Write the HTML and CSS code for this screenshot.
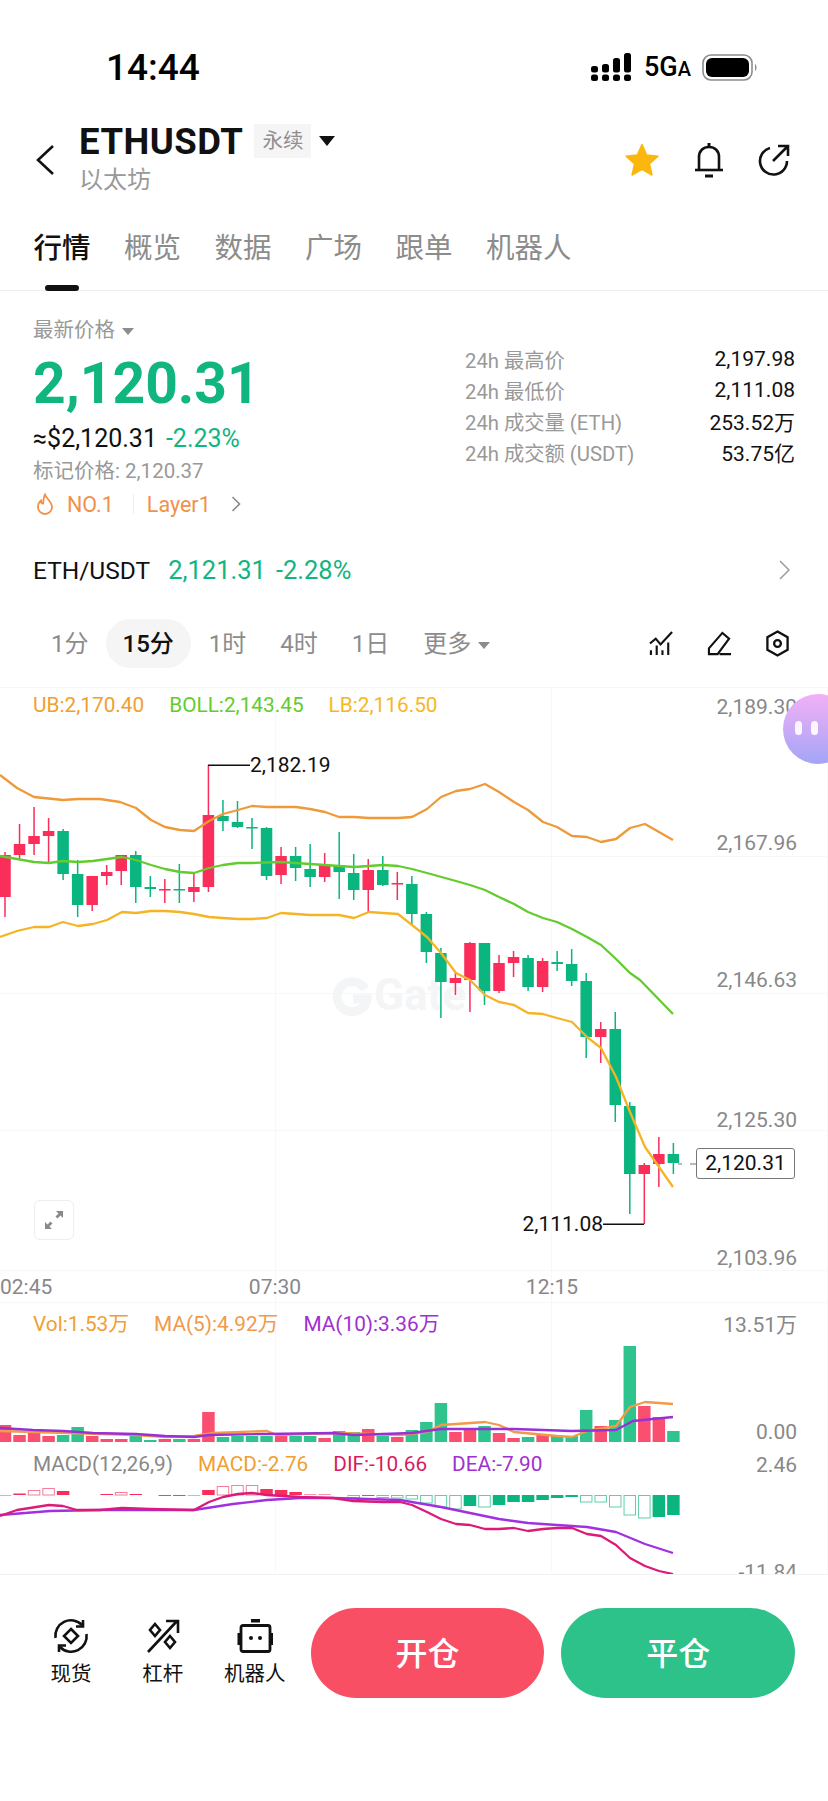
FILE: index.html
```html
<!DOCTYPE html>
<html lang="zh-CN">
<head>
    <meta charset="UTF-8">
    <title>ETHUSDT</title>
    <link rel="stylesheet" href="styles.css">
</head>
<body>
    <div class="status-bar">
        <span class="status-time">14:44</span>
        <div class="status-icons">
            <svg class="signal" viewBox="0 0 40 28" width="40" height="28" fill="#000">
                <rect x="0" y="13" width="7" height="6.500" rx="2.500"/><rect x="0" y="21.500" width="7" height="6.500" rx="2.500"/>
                <rect x="11" y="11" width="7" height="8.500" rx="2.500"/><rect x="11" y="21.500" width="7" height="6.500" rx="2.500"/>
                <rect x="22" y="5" width="7" height="14.500" rx="2.500"/><rect x="22" y="21.500" width="7" height="6.500" rx="2.500"/>
                <rect x="33" y="0" width="7" height="19.500" rx="2.500"/><rect x="33" y="21.500" width="7" height="6.500" rx="2.500"/>
            </svg>
            <span class="network">5G<small>A</small></span>
            <svg class="battery" viewBox="0 0 56 27" width="56" height="27">
                <rect x="1" y="1" width="49" height="25" rx="8" fill="none" stroke="#8c8c8c" stroke-width="1.600"/>
                <rect x="4" y="4" width="43" height="19" rx="6" fill="#000"/>
                <path d="M53 10c2 1 2 6 0 7z" fill="#8c8c8c"/>
            </svg>
        </div>
    </div>

    <div class="topbar">
        <svg class="back" viewBox="0 0 18 30" width="18" height="30" fill="none" stroke="#111" stroke-width="2.600"><path d="M17 1 2 15l15 14"/></svg>
        <div class="title-block">
            <div class="title-row">
                <span class="symbol">ETHUSDT</span>
                <span class="tag">永续</span>
                <span class="caret"></span>
            </div>
            <div class="subtitle">以太坊</div>
        </div>
        <div class="top-actions">
            <svg viewBox="0 0 36 34" width="36" height="34"><path d="M18 1.500l4.700 10.500 11.300 1.200-8.500 7.600 2.400 11.200L18 26.300 8.100 32l2.400-11.200L2 13.200 13.300 12z" fill="#fbb70f" stroke="#fbb70f" stroke-width="1.500" stroke-linejoin="round"/></svg>
            <svg viewBox="0 0 32 36" width="32" height="36" fill="none" stroke="#111" stroke-width="2.600"><path d="M6 27V15C6 9 10 5 16 5s10 4 10 10v12"/><path d="M2 28h28"/><path d="M16 1v4M12 34h8" stroke-width="3"/></svg>
            <svg viewBox="0 0 32 32" width="32" height="32" fill="none" stroke="#111" stroke-width="2.600"><path d="M29 17A13.500 13.500 0 1 1 12 4"/><path d="M15 17 29 3M20 2h10v10"/></svg>
        </div>
    </div>

    <div class="tabs">
        <span class="tab active">行情</span>
        <span class="tab">概览</span>
        <span class="tab">数据</span>
        <span class="tab">广场</span>
        <span class="tab">跟单</span>
        <span class="tab">机器人</span>
    </div>

    <section class="price-panel">
        <div class="price-left">
            <div class="price-label">最新价格<span class="caret-small"></span></div>
            <div class="price-big">2,120.31</div>
            <div class="price-usd">≈$2,120.31<span class="green">-2.23%</span></div>
            <div class="price-mark">标记价格: 2,120.37</div>
            <div class="rank-row">
                <svg viewBox="0 0 18 22" width="18" height="22" fill="none" stroke="#f0914a" stroke-width="1.800"><path d="M9 1.500c1 4 7 7 7 12.500a7 7 0 0 1-14 0c0-3 1-5 3-6.500 0 2 1 3 2 3 1-3 0-6 2-9z"/></svg>
                <span class="rank-text">NO.1</span>
                <span class="rank-sep"></span>
                <span class="rank-text">Layer1</span>
                <svg class="rank-more" viewBox="0 0 10 16" width="10" height="16" fill="none" stroke="#8a8a8a" stroke-width="1.600"><path d="M1.500 1l7 7-7 7"/></svg>
            </div>
        </div>
        <div class="stats">
            <span>24h 最高价</span><b>2,197.98</b>
            <span>24h 最低价</span><b>2,111.08</b>
            <span>24h 成交量 (ETH)</span><b>253.52万</b>
            <span>24h 成交额 (USDT)</span><b>53.75亿</b>
        </div>
    </section>

    <div class="spot-row">
        <span class="spot-name">ETH/USDT</span>
        <span class="green">2,121.31</span>
        <span class="green">-2.28%</span>
        <svg class="spot-more" viewBox="0 0 11 20" width="11" height="20" fill="none" stroke="#9a9a9a" stroke-width="1.500"><path d="M1 1l9 9-9 9"/></svg>
    </div>

    <div class="interval-row">
        <span class="interval">1分</span>
        <span class="interval active">15分</span>
        <span class="interval">1时</span>
        <span class="interval">4时</span>
        <span class="interval">1日</span>
        <span class="interval">更多<span class="caret-small"></span></span>
        <div class="chart-tools">
            <svg viewBox="0 0 26 26" width="25" height="25" fill="none" stroke="#111" stroke-width="2.200"><path d="M1 13l6-5 5 6L24 1"/><path d="M2 20v5M8 15v10M14 20v5M20 12v13"/></svg>
            <svg viewBox="0 0 26 26" width="25" height="25" fill="none" stroke="#111" stroke-width="2.200"><path d="M2 24v-6L16 2l7 6-12 16zM13 24h12"/></svg>
            <svg viewBox="0 0 26 28" width="25" height="27" fill="none" stroke="#111" stroke-width="2.400"><path d="M13 1.500l10.500 6v13L13 26.500l-10.500-6v-13z"/><circle cx="13" cy="14" r="3.500"/></svg>
        </div>
    </div>

    <div class="chart">
        <svg class="chart-svg" id="chartSvg" viewBox="0 680 828 894" width="828" height="894"></svg>

        <div class="legend legend-boll">
            <span class="c-orange">UB:2,170.40</span>
            <span class="c-green">BOLL:2,143.45</span>
            <span class="c-yellow">LB:2,116.50</span>
        </div>
        <div class="legend legend-vol">
            <span class="c-orange">Vol:1.53万</span>
            <span class="c-peach">MA(5):4.92万</span>
            <span class="c-purple">MA(10):3.36万</span>
        </div>
        <div class="legend legend-macd">
            <span class="c-gray">MACD(12,26,9)</span>
            <span class="c-orange">MACD:-2.76</span>
            <span class="c-crimson">DIF:-10.66</span>
            <span class="c-purple">DEA:-7.90</span>
        </div>

        <div class="price-tag">2,120.31</div>
        <div class="expand">
            <svg viewBox="0 0 20 20" width="20" height="20" fill="#8a8a8a"><path d="M12 1h7v7l-2.500-2.500-3 3-2-2 3-3zM8 19H1v-7l2.500 2.500 3-3 2 2-3 3z"/></svg>
        </div>
        <div class="assistant"><i></i><i></i></div>
    </div>

    <div class="footer">
        <div class="shortcut">
            <svg viewBox="0 0 36 36" width="36" height="36" fill="none" stroke="#111" stroke-width="2.600"><path d="M2.500 20A15.500 15.500 0 0 1 29 7M33.500 16A15.500 15.500 0 0 1 7 29"/><path d="M30 2v6.500h-7M6 34v-6.500h7"/><path d="M18 11l7 7-7 7-7-7z"/></svg>
            <span>现货</span>
        </div>
        <div class="shortcut">
            <svg viewBox="0 0 36 36" width="36" height="36" fill="none" stroke="#111" stroke-width="2.600"><path d="M3 34 32 3M21 3h12v12"/><path d="M10 6l5 6-5 6-5-6zM25 18l5 6-5 6-5-6z"/></svg>
            <span>杠杆</span>
        </div>
        <div class="shortcut">
            <svg viewBox="0 0 36 36" width="36" height="36"><rect x="14" y="1" width="9" height="3.500" fill="#111"/><rect x="4" y="7.500" width="29" height="26" rx="2" fill="none" stroke="#111" stroke-width="2.800"/><rect x="0.500" y="15" width="3" height="12" fill="#111"/><rect x="33" y="15" width="3" height="12" fill="#111"/><circle cx="14" cy="20" r="2" fill="#111"/><circle cx="23" cy="20" r="2" fill="#111"/></svg>
            <span>机器人</span>
        </div>
        <button class="trade-btn open">开仓</button>
        <button class="trade-btn close">平仓</button>
    </div>

    <script src="chart.js"></script>
</body>
</html>
```

FILE: styles.css
```css
/* Global */
body {
    margin: 0;
    width: 828px;
    height: 1801px;
    overflow: hidden;
    background: #fff;
    color: #111;
    font-family: Roboto, "Noto Sans CJK SC", sans-serif;
}

.green {
    color: #10b57f;
}

/* Status bar */
.status-bar {
    height: 100px;
    box-sizing: border-box;
    padding: 47px 70px 13px 106px;
    display: flex;
    justify-content: space-between;
    align-items: center;
}

.status-time {
    font-size: 37px;
    font-weight: 500;
    color: #000;
}

.status-icons {
    display: flex;
    align-items: center;
}

.network {
    margin-left: 13px;
    margin-right: 11px;
    font-size: 27px;
    font-weight: 500;
    color: #000;
}

.network small {
    font-size: 20px;
}

/* Header */
.topbar {
    height: 80px;
    margin-top: 20px;
    padding: 0 36px;
    display: flex;
    align-items: center;
}

.back {
    flex: none;
}

.title-block {
    align-self: flex-start;
    margin-left: 25px;
}

.title-row {
    height: 42px;
    display: flex;
    align-items: center;
}

.symbol {
    font-size: 36.500px;
    font-weight: 700;
    letter-spacing: 0.5px;
}

.tag {
    margin-left: 11px;
    padding: 0 8px;
    height: 34px;
    line-height: 34px;
    background: #f5f5f5;
    color: #8f8f8f;
    font-size: 20.500px;
}

.caret {
    margin-left: 8px;
    border-left: 8px solid transparent;
    border-right: 8px solid transparent;
    border-top: 10px solid #111;
}

.subtitle {
    height: 32px;
    margin-top: 2px;
    line-height: 32px;
    font-size: 24px;
    color: #999;
}

.top-actions {
    margin-left: auto;
    margin-right: 2px;
    display: flex;
    align-items: center;
    gap: 33px;
}

/* Tabs */
.tabs {
    height: 91px;
    box-sizing: border-box;
    padding-left: 33.500px;
    display: flex;
    gap: 33.500px;
    border-bottom: 1px solid #eee;
}

.tab {
    position: relative;
    padding-top: 33px;
    line-height: 32px;
    font-size: 28.500px;
    color: #8c8c8c;
}

.tab.active {
    color: #111;
    font-weight: 500;
}

.tab.active::after {
    content: "";
    position: absolute;
    left: 11px;
    bottom: -1px;
    width: 34px;
    height: 6px;
    border-radius: 3px;
    background: #111;
}

/* Price block */
.price-panel {
    height: 227px;
    box-sizing: border-box;
    padding: 27px 33px 0 33px;
    display: flex;
    justify-content: space-between;
}

.price-label {
    line-height: 24px;
    font-size: 20.500px;
    color: #999;
}

.caret-small {
    display: inline-block;
    margin-left: 7px;
    vertical-align: middle;
    border-left: 6px solid transparent;
    border-right: 6px solid transparent;
    border-top: 7px solid #8c8c8c;
}

.price-big {
    margin-top: 12px;
    line-height: 60px;
    font-size: 57px;
    font-weight: 700;
    color: #10b57f;
}

.price-usd {
    margin-top: 10px;
    line-height: 30px;
    font-size: 25px;
}

.price-usd .green {
    margin-left: 9px;
}

.price-mark {
    margin-top: 2px;
    line-height: 30px;
    font-size: 20.500px;
    color: #999;
}

.rank-row {
    margin-top: 4px;
    height: 28px;
    display: flex;
    align-items: center;
    padding-left: 3px;
}

.rank-text {
    margin-left: 13px;
    font-size: 21.500px;
    color: #f0914a;
}

.rank-sep {
    margin-left: 19px;
    margin-right: 0;
    width: 1px;
    height: 20px;
    background: #eee;
}

.rank-more {
    margin-left: 20px;
}

.stats {
    width: 330px;
    margin-top: 26px;
    display: grid;
    grid-template-columns: 1fr auto;
    grid-auto-rows: 30.800px;
    align-items: center;
    font-size: 20.300px;
    color: #999;
}

.stats b {
    font-size: 21px;
    font-weight: 400;
    color: #111;
    text-align: right;
}

/* Spot row */
.spot-row {
    height: 50px;
    margin-top: 27px;
    padding: 0 38px 0 33px;
    display: flex;
    align-items: center;
    gap: 10px;
    font-size: 25.500px;
}

.spot-name {
    margin-right: 8px;
    font-size: 24.500px;
}

.spot-more {
    margin-left: auto;
}

/* Interval row */
.interval-row {
    height: 49px;
    margin-top: 24px;
    padding: 0 38px 0 34px;
    display: flex;
    align-items: center;
}

.interval {
    height: 49px;
    line-height: 51px;
    padding: 0 17px;
    font-size: 24px;
    color: #8c8c8c;
}

.interval.active {
    margin-right: 1px;
    color: #111;
    font-weight: 500;
    background: #f5f5f5;
    border-radius: 25px;
}

.chart-tools {
    margin-left: auto;
    display: flex;
    align-items: center;
    gap: 33px;
}

/* Chart */
.chart {
    position: relative;
    height: 894px;
    margin-top: 12px;
    overflow: hidden;
    border-bottom: 1px solid #f2f2f2;
}

.chart-svg {
    position: absolute;
    left: 0;
    top: 0;
    font-family: Roboto, sans-serif;
    font-size: 21px;
}

.legend {
    position: absolute;
    left: 33px;
    display: flex;
    gap: 25px;
    line-height: 24px;
    font-size: 20.800px;
    white-space: nowrap;
}

.legend-boll {
    top: 13px;
}

.legend-vol {
    top: 632px;
}

.legend-macd {
    top: 772px;
}

.c-orange { color: #f0a030; }
.c-green { color: #62cc2e; }
.c-yellow { color: #f5b81f; }
.c-peach { color: #f09a4a; }
.c-purple { color: #a030d0; }
.c-crimson { color: #d81b60; }
.c-gray { color: #888; }

.price-tag {
    position: absolute;
    left: 696px;
    top: 468px;
    width: 97px;
    height: 29px;
    line-height: 29px;
    border: 1px solid #777;
    border-radius: 3px;
    background: #fff;
    text-align: center;
    font-size: 21px;
}

.expand {
    position: absolute;
    left: 34px;
    top: 520px;
    width: 38px;
    height: 38px;
    border: 1px solid #eee;
    border-radius: 6px;
    background: #fff;
    display: flex;
    align-items: center;
    justify-content: center;
}

.assistant {
    position: absolute;
    left: 783px;
    top: 14px;
    width: 70px;
    height: 70px;
    border-radius: 50%;
    background: linear-gradient(#f2b0f6, #a3a5f6);
    display: flex;
    gap: 9px;
    padding: 27px 0 0 12px;
    box-sizing: border-box;
}

.assistant i {
    width: 7px;
    height: 14px;
    border-radius: 3.500px;
    background: #fff;
    opacity: 0.9;
}

/* Footer */
.footer {
    height: 226px;
    box-sizing: border-box;
    padding: 33px 33px 0 25px;
    display: flex;
    align-items: flex-start;
}

.shortcut {
    width: 92px;
    padding-top: 10px;
    display: flex;
    flex-direction: column;
    align-items: center;
    font-size: 20.500px;
}

.shortcut span {
    margin-top: 6px;
    line-height: 28px;
}

.trade-btn {
    width: 234px;
    height: 90px;
    padding: 0 0 4px;
    border: none;
    border-radius: 45px;
    color: #fff;
    font-family: inherit;
    font-size: 32px;
    font-weight: 500;
}

.trade-btn.open {
    margin-left: 10px;
    background: #f94f65;
}

.trade-btn.close {
    margin-left: 17px;
    background: #2cc28a;
}
```

FILE: chart.js
```js
// color, high, body top, body bottom, low (page y)
const candles = [
    ['r',852,855,897,917],['r',824,844,855,859],['r',807,836,844,855],['r',818,831,836,862],
    ['g',829,831,874,880],['g',860,874,905,917],['r',876,876,905,911],['r',865,872,876,885],
    ['r',855,855,871,885],['g',851,855,887,903],['g',876,887,889,897],['r',879,889,890,903],
    ['g',864,889,890,903],['r',873,887,892,902],['r',765,815,887,892],['g',800,816,821,831],
    ['g',801,822,827,828],['g',818,827,828,849],['g',827,828,876,880],['r',847,856,875,884],
    ['g',847,856,868,881],['g',844,869,877,887],['r',853,865,877,882],['g',832,865,872,899],
    ['g',854,873,890,900],['r',859,870,890,912],['g',856,870,885,886],['r',872,883,884,900],
    ['g',876,884,914,925],['g',912,914,952,963],['g',948,953,982,1018],['r',972,978,983,995],
    ['r',942,943,980,1012],['g',943,943,991,1005],['r',955,963,991,993],['r',951,957,963,977],
    ['g',955,958,987,991],['r',958,961,987,992],['g',951,962,964,971],['g',949,964,981,986],
    ['g',973,981,1037,1058],['r',1022,1029,1037,1063],['g',1012,1029,1105,1122],['g',1102,1106,1174,1214],
    ['r',1163,1165,1174,1224],['r',1137,1154,1164,1187],['g',1143,1154,1163,1174]
];

const volumes = [17,7,11,6,7,15,6,3,3,6,2,3,3,3,30,5,6,6,6,6,6,6,4,11,10,13,6,5,12,20,39,10,13,16,9,4,5,7,6,6,32,16,22,96,36,25,11];

// height above (+) or below (-) the zero line, last flag = hollow
const macd = [
    [-0.500,0],[1.500,0],[5,1],[7,1],[4,0],[0,0],[0,0],[1,0],[3,1],[1,0],[0,0],[-1,0],
    [-1,0],[-0.500,0],[5,0],[9,1],[10,1],[10,1],[6,0],[5,0],[3,0],[0.500,0],[0.500,0],[0,0],
    [-2.500,1],[-1,0],[-2.500,1],[-3,1],[-4,1],[-8,1],[-12,1],[-14,1],[-11,0],[-12,1],[-10,0],[-7,0],
    [-7,0],[-5,0],[-3,0],[-2,0],[-7,1],[-7,1],[-12,1],[-20,1],[-23,1],[-22,0],[-20,0]
];

const lines = [
    ['#ee9a3a', [[0,775],[17,788],[34,797],[63,800],[78,799],[100,799],[120,802],[136,808],[151,820],[165,827],[180,830],[194,831],[209,821],[223,814],[238,810],[252,806],[267,807],[296,807],[310,809],[325,812],[339,817],[354,817],[369,818],[398,818],[412,817],[427,809],[441,797],[456,791],[470,789],[485,784],[499,792],[514,802],[528,810],[543,822],[557,827],[572,836],[587,837],[601,842],[616,839],[630,828],[645,824],[659,832],[673,840]]],
    ['#62cc2e', [[0,856],[17,859],[34,862],[49,863],[63,861],[78,862],[93,861],[107,859],[122,857],[136,860],[151,865],[165,869],[180,872],[194,873],[209,868],[223,865],[238,863],[252,863],[281,862],[310,864],[325,865],[339,866],[354,867],[369,866],[383,865],[398,866],[412,869],[427,873],[456,881],[470,885],[485,890],[499,897],[514,904],[528,912],[543,918],[557,922],[572,929],[587,937],[601,945],[616,959],[630,973],[640,980],[673,1014]]],
    ['#f5b426', [[0,937],[17,931],[34,927],[49,927],[63,922],[78,926],[93,924],[107,920],[122,912],[136,913],[151,911],[165,911],[180,912],[194,914],[209,917],[223,918],[238,919],[252,919],[267,918],[281,913],[296,914],[310,915],[325,915],[339,915],[354,918],[369,912],[383,913],[398,914],[412,925],[427,937],[441,953],[456,973],[470,980],[485,995],[499,1002],[514,1005],[528,1013],[543,1014],[557,1018],[572,1022],[587,1037],[601,1048],[616,1077],[630,1112],[645,1147],[659,1167],[673,1187]]],
    ['#f09a4a', [[0,1431],[136,1435],[165,1437],[194,1436],[213,1433],[267,1431],[277,1435],[340,1433],[369,1434],[400,1435],[427,1432],[441,1425],[456,1424],[485,1422],[499,1425],[514,1432],[557,1436],[572,1437],[587,1431],[616,1426],[630,1407],[645,1402],[673,1404]]],
    ['#9a2fd6', [[0,1428],[33,1430],[63,1431],[93,1433],[136,1434],[165,1436],[194,1437],[209,1435],[267,1434],[333,1433],[354,1435],[412,1433],[441,1429],[514,1429],[572,1431],[616,1430],[633,1421],[673,1417]]],
    ['#a030e0', [[0,1515],[50,1511],[100,1510],[194,1510],[233,1504],[267,1500],[300,1498],[333,1498],[367,1499],[400,1500],[441,1507],[470,1513],[499,1519],[528,1523],[557,1525],[587,1527],[616,1532],[645,1544],[673,1553]]],
    ['#dc1a78', [[0,1516],[17,1510],[49,1505],[63,1506],[77,1510],[100,1510],[122,1508],[150,1509],[194,1510],[209,1502],[223,1497],[238,1494],[252,1493],[267,1495],[300,1497],[333,1498],[353,1501],[383,1502],[400,1502],[412,1505],[427,1512],[441,1519],[456,1524],[470,1525],[485,1529],[499,1529],[514,1528],[528,1531],[543,1529],[557,1528],[572,1528],[587,1534],[601,1536],[616,1545],[630,1558],[645,1566],[659,1571],[673,1574]]]
];

const priceLabels = [['2,189.30',714],['2,167.96',850],['2,146.63',987],['2,125.30',1127],['2,103.96',1265],['13.51万',1332],['0.00',1439],['2.46',1472],['-11.84',1579]];
const timeLabels = [['02:45',0,'start'],['07:30',275,'middle'],['12:15',552,'middle']];

const RED = '#fb2d5b', GREEN = '#0bb57f';
const VOL_RED = '#fb4f6f', VOL_GREEN = '#2fc48d';

function candleX(i) {
    return 5 + 14.53 * i;
}

function rect(x, y, w, h, fill) {
    return `<rect x="${x}" y="${y}" width="${w}" height="${h}" fill="${fill}"/>`;
}

let svg = '';

// grid
[687, 856, 993, 1130, 1270, 1302].forEach(function(y) {
    svg += rect(0, y, 828, 1, '#f7f7f7');
});
[275, 551, 827].forEach(function(x) {
    svg += rect(x, 687, 1, 887, '#f8f8f8');
});

// watermark
svg += '<path d="M365 989a15 15 0 1 0 2 10h-14" fill="none" stroke="#f3f5f6" stroke-width="9"/>';
svg += '<text x="374" y="1010" fill="#f3f5f6" font-size="44" font-weight="700">Gate</text>';

candles.forEach(function(c, i) {
    const x = candleX(i);
    const color = c[0] === 'r' ? RED : GREEN;
    svg += rect(x - 0.75, c[1], 1.5, c[4] - c[1], color);
    svg += rect(x - 5.75, c[2], 11.5, Math.max(c[3] - c[2], 1.5), color);

    const volH = volumes[i];
    svg += rect(x - 6.25, 1442 - volH, 12.5, volH, c[0] === 'r' ? VOL_RED : VOL_GREEN);

    const h = macd[i][0];
    if (h !== 0) {
        const barColor = h > 0 ? RED : GREEN;
        const top = h > 0 ? 1495 - h : 1495;
        if (macd[i][1]) {
            svg += `<rect x="${x - 5.75}" y="${top + 0.5}" width="11.5" height="${Math.abs(h) - 0.5}" fill="#fff" stroke="${h > 0 ? '#f47f98' : '#5ecfa8'}" stroke-width="1"/>`;
        } else {
            svg += rect(x - 6.25, top, 12.5, Math.abs(h), barColor);
        }
    }
});

lines.forEach(function(l) {
    const pts = l[1].map(function(p) { return p.join(','); }).join(' ');
    svg += `<polyline points="${pts}" fill="none" stroke="${l[0]}" stroke-width="2.300" stroke-linejoin="round"/>`;
});

// high / low markers
svg += rect(208, 764.5, 42, 1.5, '#111');
svg += '<text x="250" y="772" fill="#111">2,182.19</text>';
svg += rect(603, 1223.5, 41, 1.5, '#111');
svg += '<text x="603" y="1231" fill="#111" text-anchor="end">2,111.08</text>';
svg += rect(678, 1163.5, 4, 1, '#777') + rect(690, 1163.5, 6, 1, '#777');

priceLabels.forEach(function(p) {
    svg += `<text x="797" y="${p[1]}" fill="#888" text-anchor="end">${p[0]}</text>`;
});
timeLabels.forEach(function(t) {
    svg += `<text x="${t[1]}" y="1294" fill="#888" text-anchor="${t[2]}">${t[0]}</text>`;
});

document.getElementById('chartSvg').innerHTML = svg;
```
